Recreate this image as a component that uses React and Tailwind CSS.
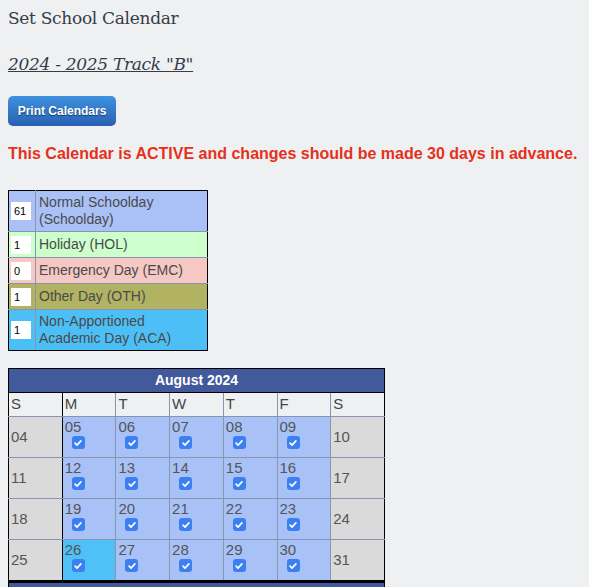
import React from "react";

const legend = [
  { n: "61", label: "Normal Schoolday (Schoolday)", bg: "bg-[#a9c1f7]", h: "h-[42px]" },
  { n: "1", label: "Holiday (HOL)", bg: "bg-[#ccffcc]", h: "h-[26px]" },
  { n: "0", label: "Emergency Day (EMC)", bg: "bg-[#f5c8c4]", h: "h-[26px]" },
  { n: "1", label: "Other Day (OTH)", bg: "bg-[#b1b262]", h: "h-[26px]" },
  { n: "1", label: "Non-Apportioned Academic Day (ACA)", bg: "bg-[#4dbff7]", h: "h-[41px]" },
];

const weeks = [
  ["04", "05", "06", "07", "08", "09", "10"],
  ["11", "12", "13", "14", "15", "16", "17"],
  ["18", "19", "20", "21", "22", "23", "24"],
  ["25", "26", "27", "28", "29", "30", "31"],
];

const Check = () => (
  <span className="flex items-center justify-center w-[13px] h-[13px] rounded-[3px] bg-[#3b7ff2] ml-[7px] mt-[1px]">
    <svg viewBox="0 0 12 12" className="w-[10px] h-[10px]" fill="none" stroke="white" strokeWidth="2" strokeLinecap="round" strokeLinejoin="round">
      <path d="M2.5 6.2l2.3 2.3 4.7-5" />
    </svg>
  </span>
);

const DayCell = ({ d, col, last }) => {
  const weekend = col === 0 || col === 6;
  const edge = `${col === 0 ? "border-l-black border-r-black" : ""} ${col === 6 ? "border-r-black" : ""} ${col === 1 ? "border-l-black" : ""} ${last ? "border-b-black" : ""}`;
  if (weekend) {
    return (
      <td className={`h-[41px] bg-[#dadada] border border-[#8795ae] px-[2px] ${edge}`}>
        {d}
      </td>
    );
  }
  const bg = d === "26" ? "bg-[#4fc1f7]" : "bg-[#a8c2f8]";
  return (
    <td className={`h-[41px] ${bg} border border-[#8795ae] px-[2px] align-top ${edge}`}>
      <div className="leading-[17px] pt-[1px]">{d}</div>
      <Check />
    </td>
  );
};

const Month = ({ title }) => (
  <table className="border-collapse border border-black w-[377px] table-fixed text-[15px] text-[#555] font-['Liberation_Sans',Arial,sans-serif]">
    <thead>
      <tr>
        <th colSpan={7} className="h-[24px] bg-[#42599b] text-white text-[14px] font-bold text-center border border-black">
          {title}
        </th>
      </tr>
      <tr>
        {["S", "M", "T", "W", "T", "F", "S"].map((l, i) => (
          <td
            key={i}
            className={`h-[24px] bg-[#eff0f2] border border-[#8795ae] px-[2px] text-[#444] ${i === 0 ? "border-x-black" : ""} ${i === 6 ? "border-r-black" : ""} ${i === 1 ? "border-l-black" : ""}`}
          >
            {l}
          </td>
        ))}
      </tr>
    </thead>
    <tbody>
      {weeks.map((w, r) => (
        <tr key={r}>
          {w.map((d, c) => (
            <DayCell key={c} d={d} col={c} last={r === weeks.length - 1} />
          ))}
        </tr>
      ))}
    </tbody>
  </table>
);

export default function App() {
  return (
    <div className="h-screen bg-[#eff0f2] px-[8px] pt-[6px] overflow-hidden">
      <h1 className="text-[17px] leading-[24px] text-[#363c47] font-['DejaVu_Serif',serif] tracking-[-0.3px]">
        Set School Calendar
      </h1>
      <h2 className="mt-[21px] text-[17px] leading-[26px] italic underline text-[#363c47] font-['DejaVu_Serif',serif] tracking-[-0.3px]">
        2024 - 2025 Track "B"
      </h2>
      <button
        type="button"
        className="mt-[19px] w-[108px] h-[30px] rounded-[5px] bg-gradient-to-b from-[#3e92e0] to-[#2960b3] text-white text-[12px] font-bold font-['Liberation_Sans',Arial,sans-serif] [text-shadow:0_1px_1px_rgba(0,0,0,0.5)]"
      >
        Print Calendars
      </button>
      <p className="mt-[17px] text-[16px] leading-[22px] font-bold text-[#e5311c] font-['Liberation_Sans',Arial,sans-serif]">
        This Calendar is ACTIVE and changes should be made 30 days in advance.
      </p>

      <table className="mt-[25px] w-[200px] border-collapse border border-black text-[14px] leading-[17px] text-[#4a4a4a] font-['Liberation_Sans',Arial,sans-serif]">
        <tbody>
          {legend.map((row, i) => {
            const tb = `${i === 0 ? "border-t-black" : ""} ${i === legend.length - 1 ? "border-b-black" : ""}`;
            return (
              <tr key={i} className={`${row.bg} ${i === 0 ? "h-[41px]" : row.h}`}>
                <td className={`w-[27px] border border-[#8795ae] border-l-black px-[2px] ${tb}`}>
                  <div className="w-[20px] h-[18px] bg-white text-[11px] text-black leading-[18px] px-[3px]">
                    {row.n}
                  </div>
                </td>
                <td className={`border border-[#8795ae] border-r-black px-[3px] ${tb}`}>{row.label}</td>
              </tr>
            );
          })}
        </tbody>
      </table>

      <div className="mt-[17px]">
        <Month title="August 2024" />
        <div className="w-[377px] h-[24px] bg-[#42599b] border-x border-t-2 border-black" />
      </div>
    </div>
  );
}
